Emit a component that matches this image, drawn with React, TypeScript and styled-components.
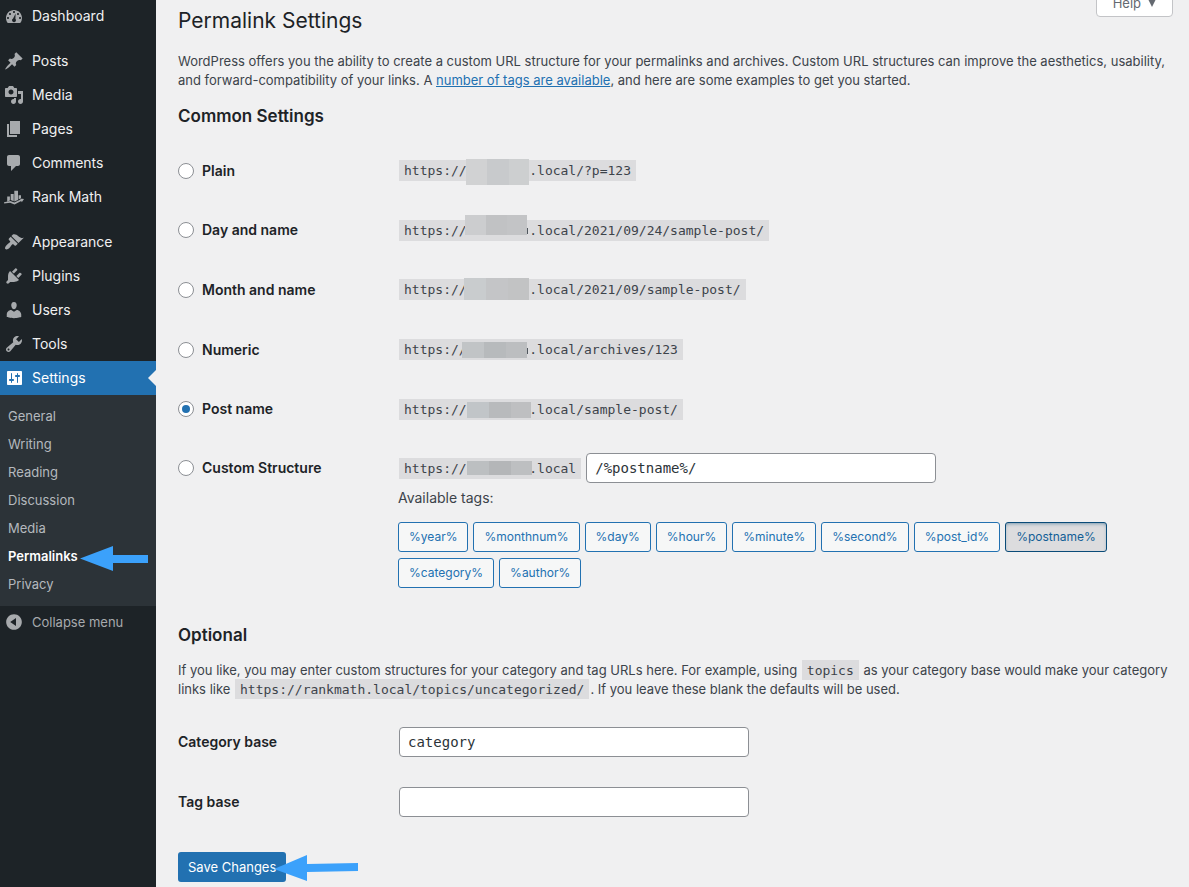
import React, { useState } from "react";
import styled, { createGlobalStyle, css } from "styled-components";

const sans = `Inter, "Open Sans", sans-serif`;
const mono = `"DejaVu Sans Mono", "Liberation Mono", monospace`;

const GlobalStyle = createGlobalStyle`
  *, *::before, *::after { box-sizing: border-box; }
  body {
    margin: 0;
    background: #f0f0f1;
    color: #3c434a;
    font: 13px/19px ${sans};
  }
`;

const Page = styled.div`
  display: flex;
  min-height: 100vh;
  overflow: hidden;
`;

/* ---------- Sidebar ---------- */

const Sidebar = styled.nav`
  flex: 0 0 156px;
  background: #1d2327;
`;

const Menu = styled.ul`
  list-style: none;
  margin: -1px 0 0;
  padding: 0;
`;

const MenuItem = styled.li<{ $gap?: boolean }>`
  margin-top: ${(p) => (p.$gap ? "11px" : "0")};
`;

const menuRow = css`
  position: relative;
  display: flex;
  align-items: center;
  gap: 8px;
  width: 100%;
  height: 34px;
  padding: 0 4px;
  font: 14px/18px ${sans};
  text-decoration: none;
`;

const MenuLink = styled.a<{ $current?: boolean }>`
  ${menuRow}
  color: ${(p) => (p.$current ? "#fff" : "#f0f0f1")};
  background: ${(p) => (p.$current ? "#2271b1" : "transparent")};

  svg {
    fill: ${(p) => (p.$current ? "#fff" : "#a7aaad")};
  }

  &::after {
    content: "";
    display: ${(p) => (p.$current ? "block" : "none")};
    position: absolute;
    right: 0;
    top: 9px;
    border: 8px solid transparent;
    border-left-width: 0;
    border-right-color: #f0f0f1;
  }
`;

const CollapseButton = styled.button`
  ${menuRow}
  height: 32px;
  border: 0;
  background: none;
  color: #a7aaad;
  font-size: 13px;
  cursor: pointer;

  svg {
    fill: #a7aaad;
  }
`;

const Submenu = styled.ul`
  list-style: none;
  margin: 0;
  padding: 7px 0 8px;
  background: #2c3338;
`;

const SubmenuItem = styled.li`
  position: relative;
`;

const SubmenuLink = styled.a<{ $current?: boolean }>`
  display: block;
  padding: 5px 8px;
  font-size: 13px;
  line-height: 18px;
  font-weight: ${(p) => (p.$current ? 600 : 400)};
  color: ${(p) => (p.$current ? "#fff" : "#b4b9be")};
  text-decoration: none;
`;

const MenuArrow = styled.svg`
  position: absolute;
  left: 80px;
  top: 2px;
  fill: #3ba1fb;
`;

/* ---------- Content ---------- */

const Content = styled.main`
  flex: 1;
  min-width: 0;
  padding: 0 16px 4px 22px;
`;

const Header = styled.header`
  display: flex;
  justify-content: space-between;
  align-items: flex-start;
`;

const Title = styled.h1`
  margin: 0;
  padding-top: 6px;
  font-size: 21px;
  line-height: 30px;
  font-weight: 400;
  color: #1d2327;
`;

const HelpButton = styled.button`
  display: flex;
  align-items: center;
  gap: 7px;
  height: 28px;
  margin: -11px 0 0;
  padding: 0 16px;
  border: 1px solid #c3c4c7;
  border-radius: 0 0 4px 4px;
  background: #fff;
  color: #646970;
  font: 13px/19px ${sans};

  svg {
    fill: #646970;
  }
`;

const Description = styled.p<{ $top: number }>`
  margin: ${(p) => p.$top}px 0 0;
`;

const TextLink = styled.a`
  color: #2271b1;
`;

const SectionTitle = styled.h2<{ $top: number }>`
  margin: ${(p) => p.$top}px 0 0;
  font-size: 17px;
  line-height: 24px;
  font-weight: 600;
  color: #1d2327;
`;

const Options = styled.div`
  display: grid;
  grid-auto-rows: 1fr;
  min-height: 298px;
  margin-top: 13px;
`;

const OptionRow = styled.div`
  display: grid;
  grid-template-columns: 220px 1fr;
  align-items: center;
`;

const CustomRow = styled.div`
  display: grid;
  grid-template-columns: 220px 1fr;
  align-items: start;
  padding-top: 14px;
`;

const RadioLabel = styled.label`
  display: flex;
  align-items: center;
  gap: 8px;
  min-height: 30px;
  font-size: 14px;
  line-height: 20px;
  font-weight: 600;
  color: #1d2327;
`;

const Radio = styled.input`
  appearance: none;
  display: grid;
  place-items: center;
  width: 16px;
  height: 16px;
  margin: 0;
  border: 1px solid #8c8f94;
  border-radius: 50%;
  background: #fff;

  &:checked::before {
    content: "";
    width: 8px;
    height: 8px;
    border-radius: 50%;
    background: #2271b1;
  }
`;

const Code = styled.code`
  display: inline-block;
  margin: 0 1px;
  padding: 1px 5px;
  background: #dcdcde;
  font: 13px/19px ${mono};
  white-space: nowrap;
`;

const InlineCode = styled.code`
  margin: 0 1px;
  padding: 3px 5px 2px;
  background: #dcdcde;
  font: 13px/16px ${mono};
`;

const HiddenName = styled.span`
  position: relative;
  display: inline-block;
  width: 8ch;
  height: 16px;
  vertical-align: middle;
`;

interface MaskShape {
  left: number;
  top: number;
  width: number;
  height: number;
  colors: [string, string, string];
  edge?: number;
}

const Mosaic = styled.span<{ $shape: MaskShape }>`
  position: absolute;
  left: ${(p) => p.$shape.left}px;
  top: ${(p) => p.$shape.top}px;
  width: ${(p) => p.$shape.width}px;
  height: ${(p) => p.$shape.height}px;
  background: ${({ $shape: { colors: c } }) =>
    `linear-gradient(90deg, ${c[0]} 34%, ${c[1]} 34%, ${c[1]} 68%, ${c[2]} 68%)`};

  &::after {
    content: "";
    display: ${(p) => (p.$shape.edge === undefined ? "none" : "block")};
    position: absolute;
    left: 100%;
    bottom: ${(p) => p.$shape.edge ?? 0}px;
    width: 1px;
    height: 6px;
    background: #50575e;
  }
`;

const CustomFields = styled.div`
  min-width: 0;
`;

const StructureLine = styled.div`
  display: flex;
  align-items: center;
  gap: 4px;
`;

const TextInput = styled.input`
  width: 350px;
  max-width: 100%;
  height: 30px;
  padding: 0 8px;
  border: 1px solid #8c8f94;
  border-radius: 4px;
  background: #fff;
  color: #2c3338;
  font: 14px/28px ${mono};
`;

const TagsCaption = styled.p`
  margin: 5px 0 14px;
  font-size: 14px;
  line-height: 20px;
`;

const TagList = styled.div`
  display: flex;
  flex-wrap: wrap;
  gap: 6px 5px;
`;

const TagButton = styled.button`
  height: 30px;
  padding: 0 10px;
  border: 1px solid #2271b1;
  border-radius: 3px;
  background: #f6f7f7;
  color: #2271b1;
  font: 12px/26px ${sans};
  white-space: nowrap;
  cursor: pointer;

  &[aria-pressed="true"] {
    border-color: #0a4b78;
    background: #dcdcde;
    color: #135e96;
    box-shadow: inset 0 2px 5px -3px #0a4b78;
  }
`;

const BaseFields = styled.div`
  display: grid;
  gap: 30px;
  margin-top: 28px;
`;

const BaseRow = styled.div`
  display: grid;
  grid-template-columns: 221px 1fr;
  align-items: center;
`;

const BaseLabel = styled.label`
  font-size: 14px;
  line-height: 20px;
  font-weight: 600;
  color: #1d2327;
`;

const Actions = styled.div`
  position: relative;
  display: flex;
  margin-top: 35px;
`;

const SaveButton = styled.button`
  height: 30px;
  padding: 0 10px;
  border: 0;
  border-radius: 3px;
  background: #2271b1;
  color: #fff;
  font: 13px/28px ${sans};
  white-space: nowrap;
`;

const SaveArrow = styled.svg`
  position: absolute;
  left: 96px;
  top: 3px;
  fill: #3ba1fb;
`;

/* ---------- Data ---------- */

const icons: Record<string, string> = {
  dashboard:
    "M3.76 17h12.48A7.96 7.96 0 0 0 18 12c0-4.41-3.58-8-8-8s-8 3.59-8 8c0 1.9.66 3.65 1.76 5zM10 5c.55 0 1 .45 1 1s-.45 1-1 1-1-.45-1-1 .45-1 1-1zM6 7c.55 0 1 .45 1 1s-.45 1-1 1-1-.45-1-1 .45-1 1-1zM14 7c.55 0 1 .45 1 1s-.45 1-1 1-1-.45-1-1 .45-1 1-1zM4 11c.55 0 1 .45 1 1s-.45 1-1 1-1-.45-1-1 .45-1 1-1zM16 11c.55 0 1 .45 1 1s-.45 1-1 1-1-.45-1-1 .45-1 1-1zM11.6 7.6l-.2 5.2c.36.36.6.84.6 1.4a2 2 0 1 1-2.9-1.79z",
  posts:
    "M10.44 3.02l1.82-1.82 6.36 6.35-1.83 1.82c-1.05-.68-2.48-.57-3.41.36l-.75.75c-.92.93-1.04 2.35-.35 3.41l-1.83 1.82-2.41-2.41-2.8 2.79c-.42.42-3.38 2.71-3.8 2.29s1.86-3.39 2.28-3.81l2.79-2.79L4.1 9.36l1.83-1.82c1.05.69 2.48.57 3.4-.36l.75-.75c.93-.92 1.05-2.35.36-3.41z",
  media:
    "M13 11V4c0-.55-.45-1-1-1h-1.67L9 1H5L3.67 3H2c-.55 0-1 .45-1 1v7c0 .55.45 1 1 1h10c.55 0 1-.45 1-1zM7 4.5c1.38 0 2.5 1.12 2.5 2.5S8.38 9.5 7 9.5 4.5 8.38 4.5 7 5.62 4.5 7 4.5zM14 6h5v10.5c0 1.38-1.12 2.5-2.5 2.5S14 17.88 14 16.5s1.12-2.5 2.5-2.5c.17 0 .34.02.5.05V9h-3V6zm-4 8.05V13h2v3.5c0 1.38-1.12 2.5-2.5 2.5S7 17.88 7 16.5 8.12 14 9.5 14c.17 0 .34.02.5.05z",
  pages: "M6 15V2h10v13H6zm-1 1h8v2H3V5h2v11z",
  comments:
    "M5 2h9c1.1 0 2 .9 2 2v7c0 1.1-.9 2-2 2h-2l-5 5v-5H5c-1.1 0-2-.9-2-2V4c0-1.1.9-2 2-2z",
  rankmath:
    "M3.2 9.4h2.700v4.100l-2.700.900zM6.700 7h3v7.200l-3-1.100zM10.300 3.700h3.700v9.200l-3.700 1.700zM14.600 8.200h2.400v2.900l-2.400 1.500zM0 15.200l6.200-1.300 4.200 1.700 6.200-3-.5-1 3.900.3-2.200 3.300-.6-1.100-6.700 3.300-4.400-1.700L.2 16.600z",
  appearance:
    "M14.48 11.06L7.41 3.99l1.5-1.5c.5-.56 2.3-.47 3.51.32 1.21.8 1.43 1.28 2.91 2.1 1.18.64 2.45 1.26 4.45.85zm-.71.71L6.7 4.7 4.93 6.47c-.39.39-.39 1.02 0 1.41l1.06 1.06c.39.39.39 1.03 0 1.42-.6.6-1.43 1.11-2.21 1.69-.35.26-.7.53-1.01.84C1.43 14.23.4 16.08 1.4 17.07c.99 1 2.84-.03 4.18-1.36.31-.31.58-.66.85-1.02.57-.78 1.08-1.61 1.69-2.21.39-.39 1.02-.39 1.41 0l1.06 1.06c.39.39 1.02.39 1.41 0z",
  plugins:
    "M13.11 4.36L9.87 7.6 8 5.73l3.24-3.24c.35-.34 1.05-.2 1.56.32.52.51.66 1.21.31 1.55zm-8 1.77l.91-1.12 9.01 9.01-1.19.84c-.71.71-2.63 1.16-3.82 1.16H6.14L4.9 17.26c-.59.59-1.54.59-2.12 0-.59-.58-.59-1.53 0-2.12l1.24-1.24v-3.88c0-1.13.4-3.19 1.09-3.89zm7.26 3.97l3.24-3.24c.34-.35 1.04-.21 1.55.31.52.51.66 1.21.31 1.55l-3.24 3.25z",
  users:
    "M10 9.25c-2.27 0-2.73-3.44-2.73-3.44C7 4.02 7.82 2 9.97 2c2.16 0 2.98 2.02 2.71 3.81 0 0-.41 3.44-2.68 3.44zm0 2.57L12.72 10c2.39 0 4.52 2.33 4.52 4.53v2.49s-3.65 1.13-7.24 1.13c-3.65 0-7.24-1.13-7.24-1.13v-2.49c0-2.25 1.94-4.48 4.47-4.48z",
  tools:
    "M16.68 9.77c-1.34 1.34-3.3 1.67-4.95.99l-5.41 6.52c-.99.99-2.59.99-3.58 0s-.99-2.59 0-3.57l6.52-5.42c-.68-1.65-.35-3.61.99-4.95 1.28-1.28 3.12-1.62 4.72-1.06l-2.89 2.89 2.82 2.82 2.86-2.87c.53 1.58.18 3.39-1.08 4.65zM3.81 16.21c.4.39 1.04.39 1.43 0 .4-.4.4-1.04 0-1.43-.39-.4-1.03-.4-1.43 0-.39.39-.39 1.03 0 1.43z",
  settings:
    "M18 16V4c0-.55-.45-1-1-1H4c-.55 0-1 .45-1 1v12c0 .55.45 1 1 1h13c.55 0 1-.45 1-1zM8 11h1c.55 0 1 .45 1 1s-.45 1-1 1H8v1.5c0 .28-.22.5-.5.5s-.5-.22-.5-.5V13H6c-.55 0-1-.45-1-1s.45-1 1-1h1V5.5c0-.28.22-.5.5-.5s.5.22.5.5V11zm5-2h-1c-.55 0-1-.45-1-1s.45-1 1-1h1V5.5c0-.28.22-.5.5-.5s.5.22.5.5V7h1c.55 0 1 .45 1 1s-.45 1-1 1h-1v5.5c0 .28-.22.5-.5.5s-.5-.22-.5-.5V9z",
  collapse:
    "M10 2.16c4.33 0 7.84 3.51 7.84 7.84s-3.51 7.84-7.84 7.84S2.16 14.33 2.16 10 5.71 2.16 10 2.16zm2 11.72V6.12L6.18 9.97z",
};

const menu = [
  { icon: "dashboard", label: "Dashboard" },
  { icon: "posts", label: "Posts", gap: true },
  { icon: "media", label: "Media" },
  { icon: "pages", label: "Pages" },
  { icon: "comments", label: "Comments" },
  { icon: "rankmath", label: "Rank Math" },
  { icon: "appearance", label: "Appearance", gap: true },
  { icon: "plugins", label: "Plugins" },
  { icon: "users", label: "Users" },
  { icon: "tools", label: "Tools" },
  { icon: "settings", label: "Settings", current: true },
];

const submenu = ["General", "Writing", "Reading", "Discussion", "Media", "Permalinks", "Privacy"];

const options: { label: string; path: string; mask: MaskShape }[] = [
  {
    label: "Plain",
    path: "/?p=123",
    mask: { left: -1, top: -5, width: 63, height: 26, colors: ["#d1d2d3", "#c8cacc", "#cdcfd0"] },
  },
  {
    label: "Day and name",
    path: "/2021/09/24/sample-post/",
    mask: {
      left: -2,
      top: -8,
      width: 62,
      height: 20,
      colors: ["#cccdcf", "#c1c2c4", "#c3c4c6"],
      edge: 1,
    },
  },
  {
    label: "Month and name",
    path: "/2021/09/sample-post/",
    mask: { left: -3, top: -5, width: 65, height: 22, colors: ["#c9ccce", "#c4c5c7", "#c2c3c4"] },
  },
  {
    label: "Numeric",
    path: "/archives/123",
    mask: {
      left: -5,
      top: -1,
      width: 65,
      height: 16,
      colors: ["#c1c4c6", "#b7babc", "#bcbec0"],
      edge: 4,
    },
  },
  {
    label: "Post name",
    path: "/sample-post/",
    mask: { left: 0, top: 0, width: 64, height: 16, colors: ["#c1c5c8", "#b8babc", "#bebfc1"] },
  },
];

const customMask: MaskShape = {
  left: 0,
  top: 0,
  width: 65,
  height: 14,
  colors: ["#bcbfc1", "#b4b6b8", "#bdbfc1"],
};

const tags = [
  "%year%",
  "%monthnum%",
  "%day%",
  "%hour%",
  "%minute%",
  "%second%",
  "%post_id%",
  "%postname%",
  "%category%",
  "%author%",
];

/* ---------- Components ---------- */

function Icon({ name }: { name: string }) {
  return (
    <svg width="20" height="20" viewBox="0 0 20 20" fillRule="evenodd" aria-hidden="true">
      <path d={icons[name]} />
    </svg>
  );
}

function SiteUrl({ path = "", mask }: { path?: string; mask: MaskShape }) {
  return (
    <Code>
      https://
      <HiddenName>
        <Mosaic $shape={mask} />
      </HiddenName>
      .local{path}
    </Code>
  );
}

export default function App() {
  const [selected, setSelected] = useState("Post name");
  const [structure, setStructure] = useState("/%postname%/");

  const toggleTag = (tag: string) =>
    setStructure((s) => (s.includes(tag) ? s.replace(`${tag}/`, "") : `${s}${tag}/`));

  return (
    <>
      <GlobalStyle />
      <Page>
        <Sidebar aria-label="Main menu">
          <Menu>
            {menu.map((item) => (
              <MenuItem key={item.label} $gap={item.gap}>
                <MenuLink href="#" $current={item.current}>
                  <Icon name={item.icon} />
                  {item.label}
                </MenuLink>
              </MenuItem>
            ))}
          </Menu>
          <Submenu>
            {submenu.map((label) => (
              <SubmenuItem key={label}>
                <SubmenuLink href="#" $current={label === "Permalinks"}>
                  {label}
                </SubmenuLink>
                {label === "Permalinks" && (
                  <MenuArrow width="68" height="28" viewBox="0 0 68 28" aria-hidden="true">
                    <path d="M0 14.500L33 2v9h35v8H33v8z" />
                  </MenuArrow>
                )}
              </SubmenuItem>
            ))}
          </Submenu>
          <CollapseButton type="button">
            <Icon name="collapse" />
            Collapse menu
          </CollapseButton>
        </Sidebar>

        <Content>
          <Header>
            <Title>Permalink Settings</Title>
            <HelpButton type="button">
              Help
              <svg width="8" height="8" viewBox="0 0 8 8" aria-hidden="true">
                <path d="M0 0h8L4 8z" />
              </svg>
            </HelpButton>
          </Header>

          <Description $top={16}>
            WordPress offers you the ability to create a custom URL structure for your permalinks and
            archives. Custom URL structures can improve the aesthetics, usability, and
            forward-compatibility of your links. A{" "}
            <TextLink href="#">number of tags are available</TextLink>, and here are some examples to
            get you started.
          </Description>

          <SectionTitle $top={14}>Common Settings</SectionTitle>

          <Options>
            {options.map((option) => (
              <OptionRow key={option.label}>
                <RadioLabel>
                  <Radio
                    type="radio"
                    name="structure"
                    checked={selected === option.label}
                    onChange={() => setSelected(option.label)}
                  />
                  {option.label}
                </RadioLabel>
                <div>
                  <SiteUrl path={option.path} mask={option.mask} />
                </div>
              </OptionRow>
            ))}
          </Options>
          <CustomRow>
            <RadioLabel>
              <Radio
                type="radio"
                name="structure"
                checked={selected === "Custom Structure"}
                onChange={() => setSelected("Custom Structure")}
              />
              Custom Structure
            </RadioLabel>
            <CustomFields>
              <StructureLine>
                <SiteUrl mask={customMask} />
                <TextInput
                  type="text"
                  aria-label="Custom structure"
                  value={structure}
                  onChange={(e) => setStructure(e.target.value)}
                />
              </StructureLine>
              <TagsCaption>Available tags:</TagsCaption>
              <TagList>
                {tags.map((tag) => (
                  <TagButton
                    key={tag}
                    type="button"
                    aria-pressed={structure.includes(tag)}
                    onClick={() => toggleTag(tag)}
                  >
                    {tag}
                  </TagButton>
                ))}
              </TagList>
            </CustomFields>
          </CustomRow>

          <SectionTitle $top={35}>Optional</SectionTitle>
          <Description $top={14}>
            If you like, you may enter custom structures for your category and tag URLs here. For
            example, using <InlineCode>topics</InlineCode> as your category base would make your
            category links like{" "}
            <InlineCode>https://rankmath.local/topics/uncategorized/</InlineCode>. If you leave these
            blank the defaults will be used.
          </Description>

          <BaseFields>
            <BaseRow>
              <BaseLabel htmlFor="category-base">Category base</BaseLabel>
              <TextInput id="category-base" type="text" defaultValue="category" />
            </BaseRow>
            <BaseRow>
              <BaseLabel htmlFor="tag-base">Tag base</BaseLabel>
              <TextInput id="tag-base" type="text" />
            </BaseRow>
          </BaseFields>

          <Actions>
            <SaveButton type="submit">Save Changes</SaveButton>
            <SaveArrow width="84" height="27" viewBox="0 0 84 27" aria-hidden="true">
              <path d="M0 14L33 0v9l51-1v8l-51 1v9z" />
            </SaveArrow>
          </Actions>
        </Content>
      </Page>
    </>
  );
}
